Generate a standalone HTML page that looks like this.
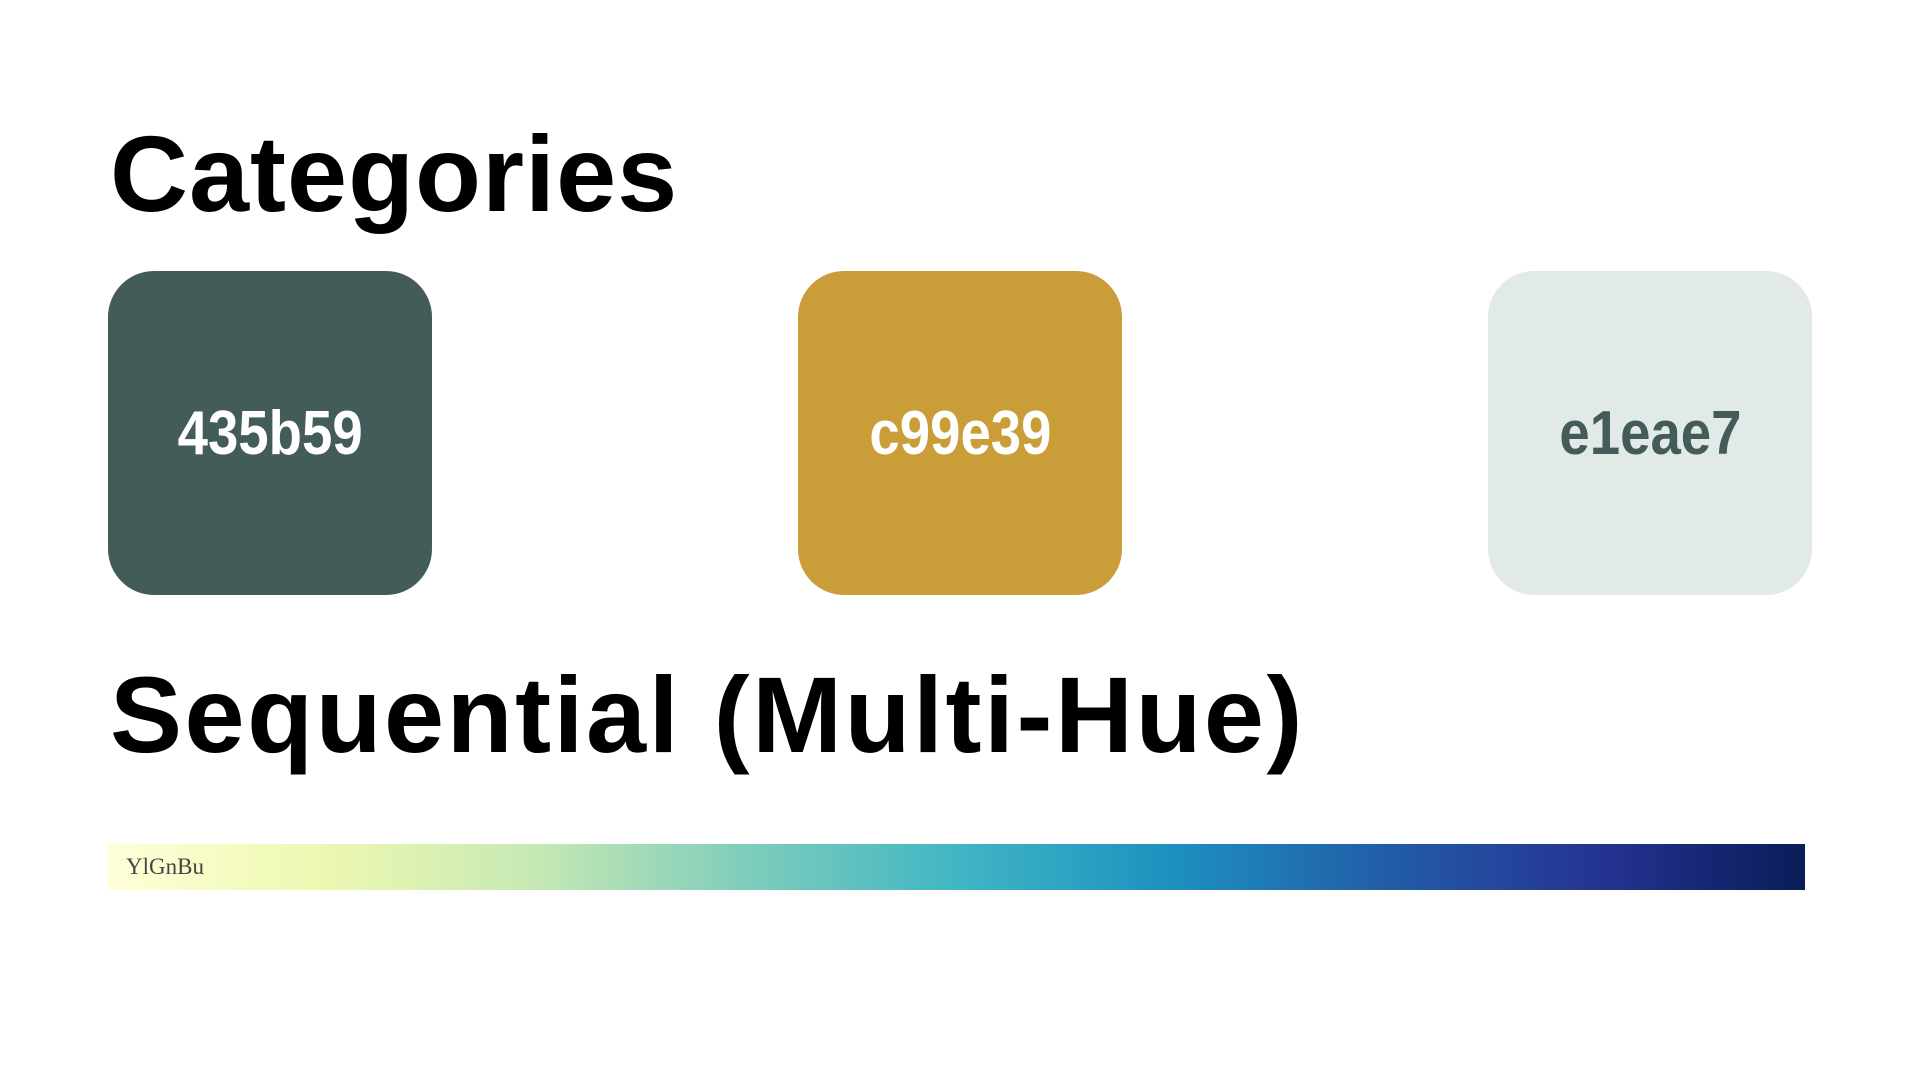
<!DOCTYPE html>
<html><head><meta charset="utf-8"><style>
body{margin:0;width:1920px;height:1080px;background:#fff;position:relative;overflow:hidden;font-family:"Liberation Sans",sans-serif}
h1{position:absolute;left:110px;margin:0;font-size:108px;font-weight:bold;line-height:1;color:#000}
.sw{position:absolute;top:271px;width:324px;height:324px;border-radius:46px;display:flex;align-items:center;justify-content:center;font-family:"Liberation Sans Narrow","Liberation Sans",sans-serif;font-weight:bold;font-size:62px}
.sw span{display:inline-block;transform:scaleX(0.88);letter-spacing:0px}
.bar{position:absolute;left:108px;top:844px;width:1697px;height:46px;background:linear-gradient(to right,#ffffd9,#edf8b1 12.5%,#c7e9b4 25%,#7fcdbb 37.5%,#41b6c4 50%,#1d91c0 62.5%,#225ea8 75%,#253494 87.5%,#081d58)}
.bar span{position:absolute;left:18px;top:10px;font-family:"Liberation Serif",serif;font-size:23px;color:#444}
</style></head><body>
<h1 style="top:120px;letter-spacing:1px">Categories</h1>
<div class="sw" style="left:108px;background:#435b59;color:#fff"><span>435b59</span></div>
<div class="sw" style="left:798px;background:#c99e39;color:#fff"><span>c99e39</span></div>
<div class="sw" style="left:1488px;background:#e1eae7;color:#435b59"><span>e1eae7</span></div>
<h1 style="top:661px;letter-spacing:2.5px">Sequential (Multi-Hue)</h1>
<div class="bar"><span>YlGnBu</span></div>
</body></html>
